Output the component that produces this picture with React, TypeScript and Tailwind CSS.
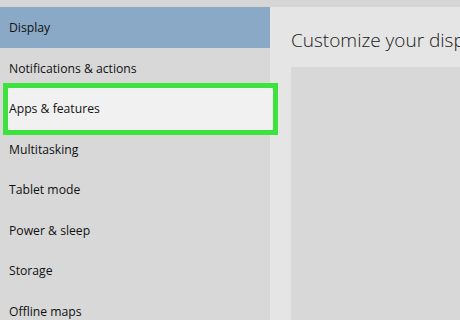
export default function App() {
  const items = [
    "Notifications & actions",
    "Apps & features",
    "Multitasking",
    "Tablet mode",
    "Power & sleep",
    "Storage",
    "Offline maps",
  ];
  return (
    <div
      className="w-[460px] h-[320px] overflow-hidden flex flex-col bg-[#d8d8d8] text-[#111]"
      style={{ fontFamily: '"Open Sans", "Noto Sans", sans-serif' }}
    >
      <div className="h-[7px] shrink-0 bg-[#d6d6d6]" />
      <div className="flex flex-1 min-h-0">
        <div className="w-[270px] shrink-0 flex flex-col bg-[#d8d8d8] relative z-10">
          <div className="h-[41px] shrink-0 bg-[#8aa9c6] flex items-center pl-[9px] pt-[1px] text-[12.2px]">
            Display
          </div>
          {items.map((t) => (
            <div
              key={t}
              className="h-[40.5px] shrink-0 flex items-center pl-[9px] pt-[1px] text-[12.2px] relative"
            >
              {t === "Apps & features" && (
                <div className="absolute left-[3px] top-[-6px] w-[275px] h-[52px] border-[5px] border-[#3ee23e] bg-[#f1f1f1]" />
              )}
              <span className="relative">{t}</span>
            </div>
          ))}
        </div>
        <div className="flex-1 bg-[#e5e5e5] flex flex-col pl-[21px]">
          <div className="h-[60px] shrink-0 flex items-start pt-[24px] text-[19px] font-light whitespace-nowrap text-[#1a1a1a] leading-none">
            Customize your display
          </div>
          <div className="flex-1 bg-[#d8d8d8]" />
        </div>
      </div>
    </div>
  );
}
